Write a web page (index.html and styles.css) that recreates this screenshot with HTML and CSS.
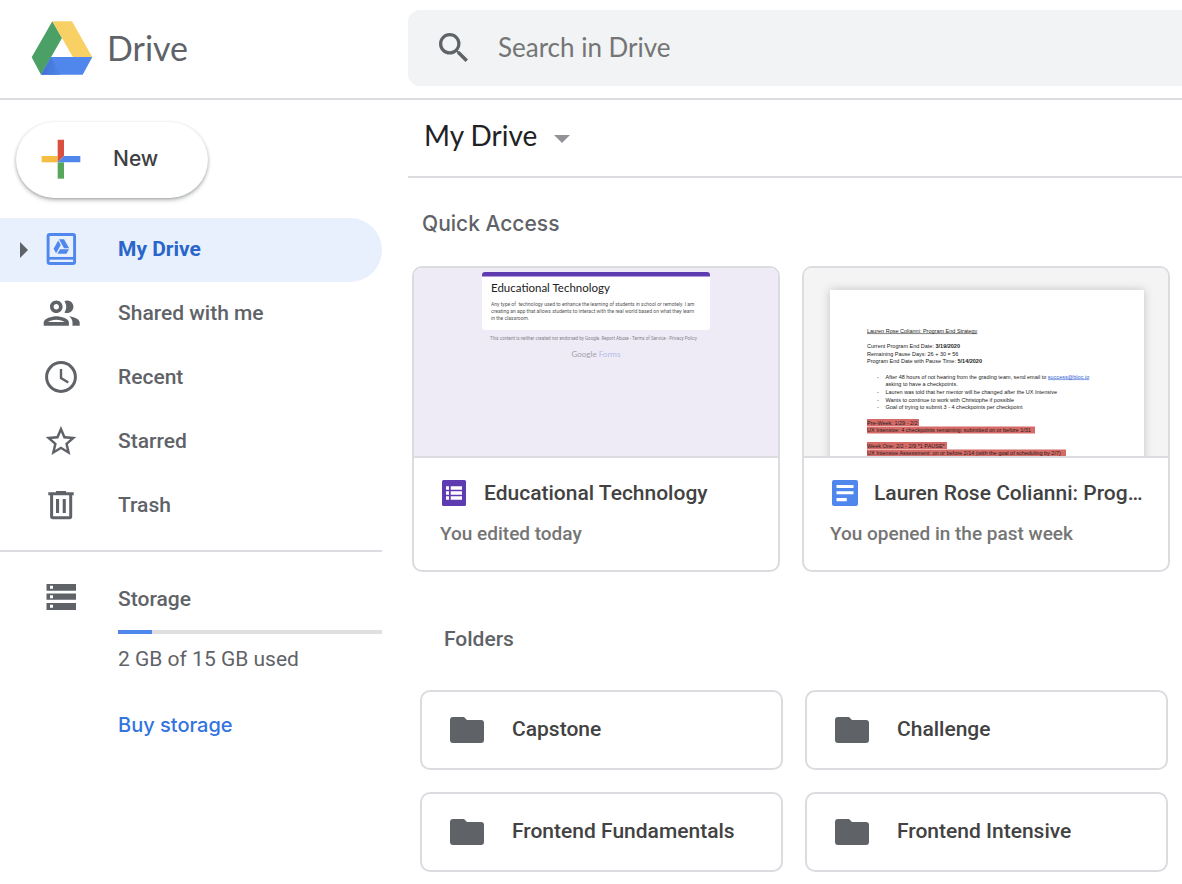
FILE: index.html
```html
<!DOCTYPE html>
<html lang="en">
<head>
<meta charset="utf-8">
<meta name="viewport" content="width=device-width, initial-scale=1">
<title>My Drive</title>
<link rel="stylesheet" href="styles.css">
</head>
<body>
<header class="topbar">
  <a class="brand" href="#">
    <svg class="brand-logo" viewBox="94 63 184 162" aria-hidden="true">
      <defs>
        <linearGradient id="shade" x1="0" y1="0" x2="1" y2="0">
          <stop offset="0" stop-color="#4470cf"/>
          <stop offset="1" stop-color="#4d84ea"/>
        </linearGradient>
      </defs>
      <path fill="#4ba066" d="M157 64 186 114 123 224 95 172z"/>
      <path fill="#f9d064" d="M157 64H216L277 172H219z"/>
      <path fill="#4f87ed" d="M153 171H277L248 224H123z"/>
      <path fill="url(#shade)" d="M153 171 181 224H123z"/>
    </svg>
    <span>Drive</span>
  </a>
  <form class="search" role="search">
    <svg class="search-icon" viewBox="3 3 17.5 17.5" aria-hidden="true"><path fill="#5f6368" d="M15.5 14h-.79l-.28-.27A6.471 6.471 0 0 0 16 9.5 6.5 6.5 0 1 0 9.500 16c1.610 0 3.090-.59 4.230-1.570l.27.280v.79l5 4.990L20.490 19l-4.990-5zm-6 0C7.010 14 5 11.990 5 9.500S7.010 5 9.500 5 14 7.010 14 9.500 11.990 14 9.500 14z"/></svg>
    <input class="search-input" type="search" placeholder="Search in Drive" aria-label="Search in Drive">
  </form>
</header>
<div class="layout">
  <aside class="sidebar">
    <button class="new-button" type="button">
      <svg class="icon" viewBox="123 417 120 120" aria-hidden="true">
        <path fill="#f5bd42" d="M125 468h48v19h-48z"/>
        <path fill="#58a55c" d="M173 487h19v49h-19z"/>
        <path fill="#d95040" d="M173 419h19v49l-19 19z"/>
        <path fill="#4f87ed" d="M192 468h49v19h-68z"/>
      </svg>
      <span>New</span>
    </button>
    <nav class="nav">
      <a class="nav-item active" href="#">
        <svg class="expand" viewBox="0 0 8 16" aria-hidden="true"><path d="M0 0 8 8 0 16z" fill="#5f6368"/></svg>
        <svg class="icon" viewBox="0 0 40 40" fill="none" stroke="#4f87ed" aria-hidden="true">
          <rect x="7.100" y="4.500" width="26.500" height="29" rx="1.800" stroke-width="2.900"/>
          <path d="M7 28.300h27" stroke-width="2.700"/>
          <path fill="#4f87ed" stroke="none" d="M18 9.300h5l5.200 9h-5.200zM17.200 10.400l2.600 4.600-4.700 8.300-2.500-4.500zM19 19.300h9l-2.600 4.400h-9z"/>
        </svg>
        <span>My Drive</span>
      </a>
      <a class="nav-item" href="#">
        <svg class="icon" viewBox="0 0 40 40" aria-hidden="true"><path transform="translate(-.9 -2.500) scale(1.800)" fill="#5f6368" d="M9 13.750c-2.340 0-7 1.170-7 3.500V19h14v-1.750c0-2.330-4.660-3.500-7-3.500zM4.340 17c.84-.58 2.870-1.250 4.660-1.250s3.820.67 4.660 1.250H4.340zM9 12c1.930 0 3.500-1.570 3.500-3.500S10.930 5 9 5 5.500 6.570 5.500 8.500 7.070 12 9 12zm0-5c.83 0 1.500.67 1.500 1.500S9.830 10 9 10s-1.500-.67-1.500-1.500S8.170 7 9 7zm7.040 6.810c1.160.84 1.960 1.960 1.960 3.440V19h4v-1.750c0-2.020-3.500-3.170-5.960-3.440zM15 12c1.930 0 3.500-1.570 3.500-3.500S16.930 5 15 5c-.54 0-1.040.13-1.500.35.63.89 1 1.980 1 3.150s-.37 2.260-1 3.150c.46.22.96.35 1.500.35z"/></svg>
        <span>Shared with me</span>
      </a>
      <a class="nav-item" href="#">
        <svg class="icon" viewBox="0 0 40 40" fill="none" stroke="#5f6368" aria-hidden="true"><circle cx="20" cy="19" r="14.400" stroke-width="3"/><path d="M20 11v9l7.300 4.500" stroke-width="2.400"/></svg>
        <span>Recent</span>
      </a>
      <a class="nav-item" href="#">
        <svg class="icon" viewBox="0 0 40 40" aria-hidden="true"><path transform="translate(1.600 .9) scale(1.530)" fill="#5f6368" d="M22 9.240l-7.190-.62L12 2 9.190 8.630 2 9.240l5.460 4.730L5.820 21 12 17.270 18.180 21l-1.630-7.030L22 9.240zM12 15.400l-3.760 2.270 1-4.280-3.320-2.880 4.380-.38L12 6.100l1.710 4.040 4.380.38-3.320 2.880 1 4.280L12 15.400z"/></svg>
        <span>Starred</span>
      </a>
      <a class="nav-item" href="#">
        <svg class="icon" viewBox="0 0 40 40" aria-hidden="true"><path fill="#5f6368" d="M7.300 6.300H15V5h10v1.300h7.700V9.300H7.300zM15 13h3.100v14H15zM21.700 13h3.100v14h-3.100z"/><path d="M10.600 8v22.500q0 1.300 1.300 1.300h16.500q1.300 0 1.300-1.300V8" fill="none" stroke="#5f6368" stroke-width="3"/></svg>
        <span>Trash</span>
      </a>
    </nav>
    <section class="storage">
      <svg class="icon" viewBox="0 0 40 40" aria-hidden="true"><path fill="#5f6368" fill-rule="evenodd" d="M5.500 5H35v6.700H5.500zM9 6.700v3h3v-3zM5.500 14.500H35v6.200H5.500zM9 16.200v3h3v-3zM5.500 24H35v7H5.500zM9 25.700v3h3v-3z"/></svg>
      <div class="storage-info">
        <h2 class="storage-title">Storage</h2>
        <div class="meter" role="progressbar" aria-label="Storage used" aria-valuenow="13" aria-valuemin="0" aria-valuemax="100"><div class="meter-fill" style="width:13%"></div></div>
        <p class="storage-used">2 GB of 15 GB used</p>
        <a class="storage-buy" href="#">Buy storage</a>
      </div>
    </section>
  </aside>
  <main class="main">
    <div class="path">
      <button class="path-button" type="button">
        <span>My Drive</span>
        <svg class="caret" viewBox="0 0 16 8" aria-hidden="true"><path d="M0 0h16L8 8z" fill="#919397"/></svg>
      </button>
    </div>
    <section class="quick">
      <h2 class="quick-title">Quick Access</h2>
      <div class="quick-grid">
        <a class="card" href="#">
          <svg class="thumb thumb-form" viewBox="0 0 728 376" preserveAspectRatio="xMidYMin meet">
            <rect x="136" y="9" width="456" height="115" rx="6" fill="#fff"/>
            <path d="M136 17v-3q0-6 6-6h444q6 0 6 6v3z" fill="#5f3bb1"/>
            <text class="form-title" x="154" y="48">Educational Technology</text>
            <g class="form-text">
              <text x="154" y="75">Any type of &nbsp;technology used to enhance the learning of students in school or remotely. I am</text>
              <text x="154" y="89">creating an app that allows students to interact with the real world based on what they learn</text>
              <text x="154" y="103">in the classroom.</text>
            </g>
            <text class="form-note" x="152" y="144">This content is neither created nor endorsed by Google. Report Abuse - Terms of Service - Privacy Policy</text>
            <text class="form-brand" x="315" y="177">Google <tspan fill="#b3bce9">Forms</tspan></text>
          </svg>
          <div class="card-body">
            <div class="card-head">
              <svg class="file-icon" viewBox="0 0 26 26" aria-hidden="true"><rect width="24" height="26" rx="1.500" fill="#5f3bb1"/><path fill="#fff" d="M4 6.300h3v3.400H4zM8.700 6.300H20v3.400H8.700zM4 11.300h3v3.400H4zM8.700 11.300H20v3.400H8.700zM4 16.300h3v3.400H4zM8.700 16.300H20v3.400H8.700z"/></svg>
              <h3 class="card-title">Educational Technology</h3>
            </div>
            <p class="card-note">You edited today</p>
          </div>
        </a>
        <a class="card" href="#">
          <svg class="thumb thumb-doc" viewBox="0 0 728 376" preserveAspectRatio="xMidYMin meet">
            <rect class="sheet" x="52" y="44" width="628" height="400" fill="#fff"/>
            <path fill="#d56a66" d="M126 302h104v14H126zM126 317h336v14H126zM126 348h160v14H126zM126 363h398v13H126z"/>
            <g class="doc-text">
              <text x="126" y="129" text-decoration="underline">Lauren Rose Colianni: Program End Strategy</text>
              <text x="126" y="159">Current Program End Date: <tspan class="strong">3/19/2020</tspan></text>
              <text x="126" y="175">Remaining Pause Days: 26 + 30 = 56</text>
              <text x="126" y="190">Program End Date with Pause Time: <tspan class="strong">5/14/2020</tspan></text>
              <text x="146" y="221">-</text>
              <text x="163" y="221">After 48 hours of not hearing from the grading team, send email to <tspan fill="#2a5bd0" text-decoration="underline">success@bloc.io</tspan></text>
              <text x="163" y="236">asking to have a checkpoints.</text>
              <text x="146" y="251">-</text>
              <text x="163" y="251">Lauren was told that her mentor will be changed after the UX Intensive</text>
              <text x="146" y="267">-</text>
              <text x="163" y="267">Wants to continue to work with Christophe if possible</text>
              <text x="146" y="282">-</text>
              <text x="163" y="282">Goal of trying to submit 3 - 4 checkpoints per checkpoint</text>
              <text x="126" y="313">Pre-Week: 1/29 - 2/2</text>
              <text x="126" y="328">UX Intensive: 4 checkpoints remaining: submitted on or before 1/31</text>
              <text x="126" y="359">Week One: 2/2 - 2/9 *1 PAUSE*</text>
              <text x="126" y="374">UX Intensive Assessment: on or before 2/14 (with the goal of scheduling by 2/7)</text>
            </g>
          </svg>
          <div class="card-body">
            <div class="card-head">
              <svg class="file-icon" viewBox="0 0 26 26" aria-hidden="true"><rect width="26" height="26" rx="2" fill="#4f87ed"/><path fill="#fff" d="M4.500 5h17v3h-17zM4.500 11.300h17v3h-17zM4.500 18h10.300v3.300H4.500z"/></svg>
              <h3 class="card-title">Lauren Rose Colianni: Prog…</h3>
            </div>
            <p class="card-note">You opened in the past week</p>
          </div>
        </a>
      </div>
    </section>
    <section class="folders">
      <h2 class="folders-title">Folders</h2>
      <div class="folder-grid">
        <a class="folder" href="#"><svg class="folder-icon" viewBox="0 0 34 26" aria-hidden="true"><path fill="#5f6368" d="M3 0h11l3 3h14q3 0 3 3v17q0 3-3 3H3q-3 0-3-3V3q0-3 3-3z"/></svg><span>Capstone</span></a>
        <a class="folder" href="#"><svg class="folder-icon" viewBox="0 0 34 26" aria-hidden="true"><path fill="#5f6368" d="M3 0h11l3 3h14q3 0 3 3v17q0 3-3 3H3q-3 0-3-3V3q0-3 3-3z"/></svg><span>Challenge</span></a>
        <a class="folder" href="#"><svg class="folder-icon" viewBox="0 0 34 26" aria-hidden="true"><path fill="#5f6368" d="M3 0h11l3 3h14q3 0 3 3v17q0 3-3 3H3q-3 0-3-3V3q0-3 3-3z"/></svg><span>Frontend Fundamentals</span></a>
        <a class="folder" href="#"><svg class="folder-icon" viewBox="0 0 34 26" aria-hidden="true"><path fill="#5f6368" d="M3 0h11l3 3h14q3 0 3 3v17q0 3-3 3H3q-3 0-3-3V3q0-3 3-3z"/></svg><span>Frontend Intensive</span></a>
      </div>
    </section>
  </main>
</div>
</body>
</html>
```
FILE: styles.css
```css
* {
  box-sizing: border-box;
}

body {
  margin: 0;
  background: #fff;
  color: #5f6368;
  font-family: Roboto, "Liberation Sans", sans-serif;
  font-size: 21px;
  line-height: 24px;
}

h2,
h3,
p {
  margin: 0;
  font-size: inherit;
  font-weight: 500;
}

a {
  color: inherit;
  text-decoration: none;
}

button {
  border: 0;
  background: none;
  font: inherit;
  cursor: pointer;
}

svg {
  display: block;
  flex: none;
}

.icon {
  width: 40px;
  height: 40px;
}

/* Header */
.topbar {
  display: flex;
  height: 100px;
  padding: 10px 0 12px;
  border-bottom: 2px solid #dadce0;
}

.brand {
  display: flex;
  flex: none;
  align-items: center;
  gap: 14px;
  width: 408px;
  padding-left: 31px;
  font-family: Lato, sans-serif;
  font-size: 34px;
  line-height: 40px;
}

.brand-logo {
  width: 62px;
  height: 54px;
}

.search {
  display: flex;
  flex: 1;
  align-items: center;
  gap: 30px;
  padding: 0 0 2px 31px;
  border-radius: 12px 0 0 12px;
  background: #f1f3f4;
}

.search-icon {
  width: 29px;
  height: 29px;
}

.search-input {
  flex: 1;
  min-width: 0;
  padding: 0;
  border: 0;
  outline: 0;
  background: none;
  color: #202124;
  font-family: Lato, sans-serif;
  font-size: 26px;
}

.search-input::placeholder {
  color: #757575;
  opacity: 1;
}

.layout {
  display: flex;
}

/* Sidebar */
.sidebar {
  flex: none;
  width: 382px;
  margin-right: 26px;
  padding-top: 22px;
}

.new-button {
  display: flex;
  align-items: center;
  gap: 32px;
  width: 192px;
  height: 76px;
  margin-left: 16px;
  padding: 0 0 2px 25px;
  border-radius: 38px;
  background: #fff;
  box-shadow: 0 1px 3px rgba(60, 64, 67, .35), 0 3px 4px rgba(60, 64, 67, .2);
  color: #3c4043;
  font-family: Inter, sans-serif;
  font-size: 21px;
  font-weight: 500;
}

.nav {
  margin-top: 20px;
  padding-bottom: 12px;
  border-bottom: 2px solid #dadce0;
}

.nav-item {
  display: flex;
  align-items: center;
  gap: 37px;
  height: 64px;
  padding-left: 41px;
  font-weight: 500;
}

.nav-item span {
  padding-bottom: 2px;
}

.nav-item.active {
  gap: 0;
  padding-left: 20px;
  border-radius: 0 32px 32px 0;
  background: #e8f0fe;
  color: #2a66c9;
  font-weight: 700;
}

.nav-item.active .icon {
  margin: 0 37px 0 13px;
}

.expand {
  width: 8px;
  height: 16px;
}

.storage {
  display: flex;
  gap: 37px;
  padding: 27px 0 0 41px;
}

.storage-info {
  flex: 1;
  padding-top: 8px;
}

.meter {
  height: 4px;
  margin: 19px 0 13px;
  background: #e0e0e0;
}

.meter-fill {
  height: 4px;
  background: #4f87ed;
}

.storage-used {
  font-weight: 400;
}

.storage-buy {
  display: inline-block;
  margin-top: 42px;
  color: #3274e0;
  font-family: Inter, sans-serif;
  font-size: 20px;
  font-weight: 500;
}

/* Main column */
.main {
  flex: 1;
  min-width: 0;
}

.path {
  display: flex;
  align-items: center;
  height: 78px;
  padding: 0 16px 6px;
  border-bottom: 2px solid #dadce0;
}

.path-button {
  display: flex;
  align-items: center;
  gap: 17px;
  padding: 0;
  color: #202124;
  font-family: Lato, sans-serif;
  font-size: 28px;
  line-height: 36px;
}

.caret {
  width: 16px;
  height: 8px;
  margin-top: 8px;
}

.quick {
  padding: 34px 12px 0 4px;
}

.quick-title {
  padding-left: 10px;
  font-family: Inter, sans-serif;
  font-size: 21px;
}

.quick-grid {
  display: grid;
  grid-template-columns: repeat(2, minmax(0, 1fr));
  gap: 22px;
  margin-top: 30px;
}

.card {
  overflow: hidden;
  border: 2px solid #dadce0;
  border-radius: 10px;
}

.thumb {
  width: 100%;
  height: 188px;
}

.thumb-form {
  background: #eeebf6;
}

.thumb-doc {
  background: #f4f4f4;
}

.form-title {
  fill: #212121;
  font-family: Lato, sans-serif;
  font-size: 23px;
}

.form-text {
  fill: #555;
  font-family: Roboto, sans-serif;
  font-size: 10px;
}

.form-note {
  fill: #85828b;
  font-family: Roboto, sans-serif;
  font-size: 9px;
}

.form-brand {
  fill: #a3a0aa;
  font-family: Lato, sans-serif;
  font-size: 16px;
}

.sheet {
  filter: drop-shadow(0 0 10px rgba(0, 0, 0, .2));
}

.doc-text {
  fill: #222;
  font-family: "Liberation Sans", Arial, sans-serif;
  font-size: 11px;
}

.strong {
  font-weight: 700;
}

.card-body {
  height: 114px;
  padding: 22px 20px 0 26px;
  border-top: 2px solid #dadce0;
}

.card-head {
  display: flex;
  align-items: center;
  gap: 16px;
  padding-left: 2px;
}

.file-icon {
  width: 26px;
  height: 26px;
}

.card-title {
  overflow: hidden;
  color: #424242;
  text-overflow: ellipsis;
  white-space: nowrap;
}

.card-note {
  margin-top: 16px;
  color: #757575;
  font-size: 19px;
}

.folders {
  padding: 55px 14px 12px 12px;
}

.folders-title {
  padding-left: 24px;
}

.folder-grid {
  display: grid;
  grid-template-columns: repeat(2, minmax(0, 1fr));
  gap: 22px;
  margin-top: 39px;
}

.folder {
  display: flex;
  align-items: center;
  gap: 28px;
  height: 80px;
  padding: 0 28px 2px;
  border: 2px solid #dadce0;
  border-radius: 10px;
  color: #424242;
  font-weight: 500;
}

.folder-icon {
  width: 34px;
  height: 26px;
  margin-top: 2px;
}
```
